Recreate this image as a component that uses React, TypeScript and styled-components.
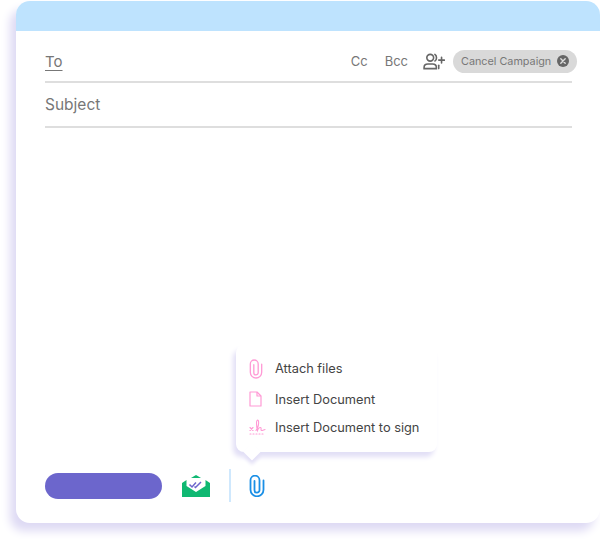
import React from 'react'
import styled, { createGlobalStyle } from 'styled-components'

const GlobalStyle = createGlobalStyle`
  html, body {
    margin: 0;
    padding: 0;
    background: #fff;
  }
  #root {
    width: 600px;
    height: 539px;
    overflow: hidden;
  }
`

const PaperclipIcon: React.FC<{ color: string; width: number; height: number; weight: number }> = ({
  color,
  width,
  height,
  weight
}) => (
  <svg width={width} height={height} viewBox="0 0 16 22" fill="none" stroke={color} strokeWidth={weight} strokeLinecap="round">
    <path d="M5.500 6v9.200a2.500 2.500 0 0 0 5 0V5.200a4.500 4.500 0 0 0-9 0v9.600a6.500 6.500 0 0 0 13 0V5.500" />
  </svg>
)

const App: React.FC = () => {
  return (
    <Page>
      <GlobalStyle />
      <Card>
        <Header />
        <Form>
          <ToRow>
            <ToLabel>To</ToLabel>
            <Recipients>
              <LinkText>Cc</LinkText>
              <LinkText>Bcc</LinkText>
              <svg width="22" height="17" viewBox="0 0 23 18" fill="none" stroke="#666" strokeWidth="1.700" strokeLinecap="round">
                <circle cx="7.500" cy="5" r="3.600" />
                <path d="M1 16.500v-1.200c0-2.200 1.800-3.600 4-3.600h5c2.200 0 4 1.400 4 3.600v1.200z" />
                <path d="M12.500 1.500c2.200 1 2.200 6 0 7" />
                <path d="M19.500 4.500v6M16.500 7.500h6" />
                <path d="M16.500 13v3.500" />
              </svg>
              <Chip>
                Cancel Campaign
                <svg width="12" height="12" viewBox="0 0 12 12">
                  <circle cx="6" cy="6" r="6" fill="#666" />
                  <path d="M3.800 3.800l4.400 4.400M8.200 3.800l-4.400 4.400" stroke="#ddd" strokeWidth="1.400" strokeLinecap="round" />
                </svg>
              </Chip>
            </Recipients>
          </ToRow>
          <SubjectRow>Subject</SubjectRow>
        </Form>
        <Footer>
          <SendButton />
          <svg width="28" height="22" viewBox="0 0 28 22">
            <path d="M9 3l5-3 5 3z" fill="#0fb872" />
            <path d="M0 8l4.500-3v6L14 17l9.500-6V5L28 8v14H0z" fill="#0fb872" />
            <path
              d="M7.500 9.500l2.500 2.500 4-4.500M12.500 11.500l1 1 5.500-5.500"
              fill="none"
              stroke="#6c66cc"
              strokeWidth="1.500"
            />
          </svg>
          <Divider />
          <PaperclipIcon color="#1a8fe6" width={16} height={22} weight={1.8} />
        </Footer>
        <AttachMenu>
          <MenuItem $height={31}>
            <IconSlot>
              <PaperclipIcon color="#ff9ad5" width={14} height={20} weight={1.5} />
            </IconSlot>
            Attach files
          </MenuItem>
          <MenuItem $height={30}>
            <IconSlot>
              <svg width="13" height="16" viewBox="0 0 13 16" fill="none" stroke="#ff9ad5" strokeWidth="1.200" strokeLinejoin="round">
                <path d="M1 1h7l4 4v10H1z" />
                <path d="M8 1v4h4" />
              </svg>
            </IconSlot>
            Insert Document
          </MenuItem>
          <MenuItem $height={26}>
            <IconSlot>
              <svg width="17" height="16" viewBox="0 0 17 16" fill="none" stroke="#ff9ad5" strokeWidth="1.100" strokeLinecap="round">
                <path d="M1 8.500l3 3M4 8.500l-3 3" />
                <path d="M7 11.500c2-3 3-7 2.500-9.500C9 .5 7.500 1 7.500 4c0 3 .5 6 1 7.500.7-2.500 2.500-3.500 3.300-2.800.8.800-.3 2.800.7 2.800s2.300-.7 3.500-1" />
                <path d="M1 15h15" strokeDasharray="1 2" />
              </svg>
            </IconSlot>
            Insert Document to sign
          </MenuItem>
        </AttachMenu>
      </Card>
    </Page>
  )
}

const Page = styled.div`
  box-sizing: border-box;
  width: 600px;
  height: 539px;
  padding: 1px 0 16px 16px;
  font-family: 'Inter', 'Liberation Sans', sans-serif;
`

const Card = styled.div`
  position: relative;
  display: flex;
  flex-direction: column;
  height: 100%;
  background: #fff;
  border-radius: 14px;
  box-shadow: -6px 8px 10px #dedaf4;
`

const Header = styled.div`
  height: 30px;
  flex: none;
  background: #bee3fe;
  border-radius: 14px 14px 0 0;
`

const Form = styled.div`
  flex: 1;
  display: flex;
  flex-direction: column;
  padding: 0 28px 0 29px;
`

const ToRow = styled.div`
  box-sizing: border-box;
  height: 52px;
  padding-top: 10px;
  display: flex;
  align-items: center;
  justify-content: space-between;
  border-bottom: 2px solid #dedede;
`

const ToLabel = styled.span`
  font-size: 15px;
  color: #777;
  text-decoration: underline;
  text-underline-offset: 3px;
`

const Recipients = styled.div`
  display: flex;
  align-items: center;
  margin-right: -5px;
`

const LinkText = styled.span`
  font-size: 13px;
  color: #777;
  margin-right: 17px;
  &:nth-child(2) {
    margin-right: 15px;
  }
`

const Chip = styled.div`
  display: flex;
  align-items: center;
  justify-content: space-between;
  box-sizing: border-box;
  width: 124px;
  height: 23px;
  margin-left: 8px;
  padding: 0 8px;
  border-radius: 12px;
  background: #d9d9d9;
  font-size: 10.800px;
  color: #777;
`

const SubjectRow = styled.div`
  box-sizing: border-box;
  height: 45px;
  display: flex;
  align-items: center;
  border-bottom: 2px solid #dedede;
  font-size: 15.500px;
  color: #777;
`

const Footer = styled.div`
  box-sizing: border-box;
  height: 54px;
  flex: none;
  display: flex;
  align-items: center;
  padding: 0 0 20px 29px;
  svg {
    flex: none;
  }
`

const SendButton = styled.div`
  width: 117px;
  height: 26px;
  margin-right: 20px;
  border-radius: 13px;
  background: #6c66cc;
`

const Divider = styled.div`
  width: 2px;
  height: 33px;
  margin: -2px 18px 0 19px;
  background: #cfe8fd;
`

const AttachMenu = styled.div`
  position: absolute;
  left: 220px;
  top: 344px;
  box-sizing: border-box;
  width: 201px;
  height: 107px;
  padding: 8px 0 0 13px;
  background: #fff;
  border-radius: 8px;
  box-shadow: -3px 5px 5px #e2dff6;

  &::after {
    content: '';
    position: absolute;
    left: 10px;
    bottom: -6px;
    width: 12px;
    height: 12px;
    background: #fff;
    transform: rotate(45deg);
    box-shadow: 3px 3px 4px #e2dff6;
  }
`

const MenuItem = styled.div<{ $height: number }>`
  position: relative;
  z-index: 1;
  display: flex;
  align-items: center;
  height: ${p => p.$height}px;
  font-size: 12.800px;
  color: #444;
`

const IconSlot = styled.div`
  width: 26px;
  flex: none;
  display: flex;
  align-items: center;
`

export default App
